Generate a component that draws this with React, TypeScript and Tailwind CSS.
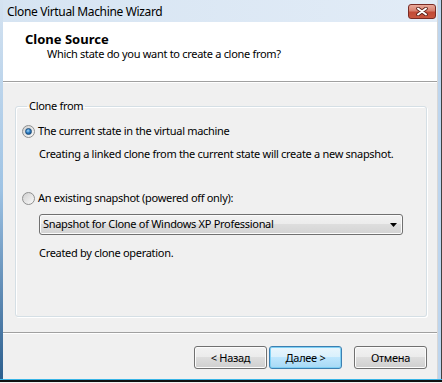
function Radio({ checked }: { checked: boolean }) {
  return (
    <span className="w-[13px] h-[13px] rounded-full border border-[#8e8f8f] bg-linear-to-br from-[#d0d0d0] to-[#fafafa] flex items-center justify-center shrink-0">
      {checked && (
        <span className="w-[7px] h-[7px] rounded-full border border-[#1d4f7c] bg-[radial-gradient(circle_at_40%_35%,#a6d8f8_0%,#2f7fc6_45%,#0b3f78_100%)]" />
      )}
    </span>
  );
}

function WinButton({ label, primary }: { label: string; primary?: boolean }) {
  return (
    <button
      className={`w-[73px] h-[23px] rounded-[3px] border text-black leading-none ${
        primary
          ? "border-[#3c7fb1] bg-[linear-gradient(#eaf6fd_0%,#d9f0fc_49%,#bee6fd_50%,#a7d9f5_100%)] shadow-[inset_0_0_0_1px_#7fd0f4]"
          : "border-[#707070] bg-[linear-gradient(#f2f2f2_0%,#ebebeb_49%,#dddddd_50%,#cfcfcf_100%)] shadow-[inset_0_0_0_1px_#fcfcfc]"
      }`}
    >
      {label}
    </button>
  );
}

export default function App() {
  return (
    <div className="w-[442px] h-[383px] flex flex-col bg-white text-[11px] tracking-[-0.3px] text-black [font-family:'Noto_Sans',sans-serif]">
      <div className="flex flex-1 min-h-0">
        {/* left frame */}
        <div className="w-[3px] bg-linear-to-b from-[#d5e3f1] via-[#9ec3e4] to-[#2c5f8e]" />

        <div className="flex-1 flex flex-col min-w-0">
          {/* title bar */}
          <div className="h-[22px] flex items-start bg-linear-to-r from-[#d6e4f2] to-[#e2ecf7]">
            <span className="pl-[4px] pt-[4px] leading-[16px] text-[12px] tracking-[-0.35px]">Clone Virtual Machine Wizard</span>
            <div className="ml-auto mr-[1px] mt-[4px] w-[28px] h-[15px] rounded-[3px] border border-[#7a2b24] bg-[linear-gradient(#e9a99b_0%,#d7806f_45%,#c24a36_55%,#c8563f_100%)] flex items-center justify-center">
              <svg width="12" height="9" viewBox="0 0 12 9">
                <path d="M2 1.5 L10 7.5 M10 1.5 L2 7.5" stroke="#5a1f18" strokeWidth="3.6" strokeLinecap="round" />
                <path d="M2 1.5 L10 7.5 M10 1.5 L2 7.5" stroke="#ffffff" strokeWidth="2" strokeLinecap="round" />
              </svg>
            </div>
          </div>

          {/* header */}
          <div className="h-[59px] bg-white pt-[10px]">
            <div className="pl-[22px] font-bold text-[13px] tracking-normal leading-[15px]">Clone Source</div>
            <div className="pl-[44px] leading-[14px]">Which state do you want to create a clone from?</div>
          </div>
          <div className="h-px bg-[#a0a0a0]" />
          <div className="h-px bg-white" />

          {/* body */}
          <div className="flex-1 bg-[#f0f0f0] pt-[15px] pl-[12px]">
            <fieldset className="w-[412px] h-[219px] border border-[#d5dfe5] rounded-[3px] shadow-[inset_1px_1px_0_#ffffff,1px_1px_0_#ffffff] pl-[6px]">
              <legend className="ml-[5px] px-[2px] leading-[16px]">Clone from</legend>
              <div className="mt-[9px] flex items-center h-[16px] gap-[3px]">
                <Radio checked />
                <span>The current state in the virtual machine</span>
              </div>
              <div className="mt-[7px] pl-[17px] leading-[16px]">
                Creating a linked clone from the current state will create a new snapshot.
              </div>
              <div className="mt-[28px] flex items-center h-[16px] gap-[3px]">
                <Radio checked={false} />
                <span>An existing snapshot (powered off only):</span>
              </div>
              <div className="mt-[8px] ml-[17px] w-[364px] h-[21px] rounded-[3px] border border-[#707070] bg-[linear-gradient(#f2f2f2_0%,#ebebeb_49%,#dddddd_50%,#d3d3d3_100%)] shadow-[inset_0_0_0_1px_#fbfbfb] flex items-center pl-[3px] pr-[4px]">
                <span className="flex-1">Snapshot for Clone of Windows XP Professional</span>
                <svg width="7" height="4" viewBox="0 0 7 4" className="mr-[1px]">
                  <path d="M0 0 H7 L3.5 4 Z" fill="#000" />
                </svg>
              </div>
              <div className="mt-[10px] pl-[17px] leading-[16px]">Created by clone operation.</div>
            </fieldset>
          </div>

          <div className="h-px bg-[#a0a0a0]" />
          <div className="h-px bg-white" />

          {/* footer */}
          <div className="h-[45px] bg-[#f0f0f0] pt-[12px] pr-[10px] flex justify-end items-start">
            <WinButton label="< Назад" />
            <div className="w-[2px]" />
            <WinButton label="Далее >" primary />
            <div className="w-[12px]" />
            <WinButton label="Отмена" />
          </div>
        </div>

        {/* right frame */}
        <div className="w-[5px] flex">
          <div className="w-px bg-[#d7d7d7]" />
          <div className="w-[3px] bg-[#bdd5ee]" />
          <div className="w-px bg-[#404040]" />
        </div>
      </div>
      <div className="h-px bg-[#37b4e6]" />
      <div className="h-[2px] bg-[#111111]" />
      <div className="h-px bg-[#f0f0f0]" />
    </div>
  );
}
